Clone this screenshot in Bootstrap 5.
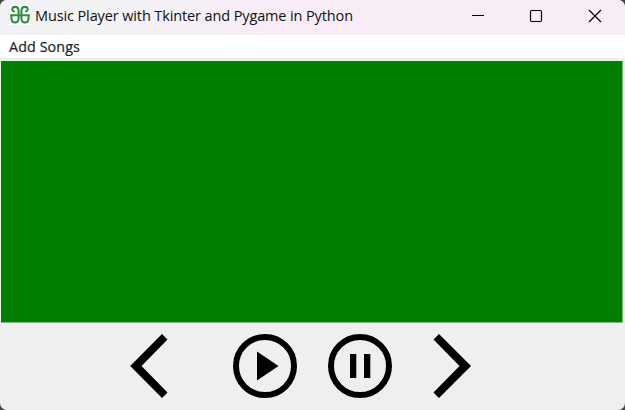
<!DOCTYPE html>
<html lang="en">
<head>
<meta charset="utf-8">
<meta name="viewport" content="width=device-width, initial-scale=1">
<title>Music Player with Tkinter and Pygame in Python</title>
<link href="https://cdn.jsdelivr.net/npm/bootstrap@5.3.0/dist/css/bootstrap.min.css" rel="stylesheet">
<style>
body { background: #444; font-family: "Open Sans", "Noto Sans", sans-serif; color: #111; }
.player-window { height: 410px; background: #efefef; border-radius: 7px; }
.title-strip { height: 35px; background: linear-gradient(90deg, #f2f2f4 0, #f3f1f5 130px, #f8edf7 260px, #f8edf7 100%); padding-left: 10px; }
.app-logo { width: 20px; height: 20px; margin-bottom: 5px; }
.window-title { font-size: 14.5px; line-height: 20px; letter-spacing: -.12px; margin: 0 0 3px 5px; }
.window-control { width: 58px; height: 32px; }
.menu-strip { height: 23px; padding-left: 9px; }
.menu-entry { font-size: 14.3px; line-height: 22px; letter-spacing: .1px; padding-top: 1px; color: #222; -webkit-text-stroke: .2px #222; }
.song-list { height: 262px; margin: 3px 2px 0 1px; background: #008000; border: 1px solid; border-color: #286c28 #79bd79 #79bd79 #286c28; }
.controls { padding: 9px 0 0 127px; }
.controls button { width: 70px; height: 70px; }
.controls .play-button { margin-left: 33px; }
.controls .pause-button { margin-left: 25px; }
.controls .next-button { margin-left: 35px; }
</style>
<script src="https://cdn.jsdelivr.net/npm/bootstrap@5.3.0/dist/js/bootstrap.bundle.min.js"></script>
</head>
<body class="overflow-hidden">
<main class="player-window overflow-hidden">
  <header class="title-strip d-flex align-items-center">
    <svg class="app-logo" viewBox="0 0 20 20" aria-hidden="true">
      <rect width="20" height="20" fill="#fff"/>
      <g fill="none" stroke="#2f8d46" stroke-width="2.100">
        <path d="M4.800 6.200C1.500 6.500 1.500 1.900 5 1.900C7.300 1.900 8.600 3.500 8.600 6V13C8.600 19 1.400 19 1.400 13V10"/>
        <path d="M15.200 6.200C18.500 6.500 18.500 1.900 15 1.900C12.700 1.900 11.400 3.500 11.400 6V13C11.400 19 18.600 19 18.600 13V10"/>
        <path d="M.3 10.300H19.700"/>
      </g>
    </svg>
    <h1 class="window-title fw-normal text-nowrap">Music Player with Tkinter and Pygame in Python</h1>
    <div class="d-flex ms-auto align-self-start">
      <button class="window-control btn p-0 border-0 rounded-0 d-flex" aria-label="Minimize"><svg width="58" height="32"><path d="M21 15.500H33" stroke="#000"/></svg></button>
      <button class="window-control btn p-0 border-0 rounded-0 d-flex" aria-label="Maximize"><svg width="58" height="32"><rect x="21.500" y="10.500" width="11" height="11" rx="1.200" fill="none" stroke="#000" stroke-width="1.200"/></svg></button>
      <button class="window-control btn p-0 border-0 rounded-0 d-flex" aria-label="Close"><svg width="58" height="32"><path d="M22 10L34 22M34 10L22 22" stroke="#000" stroke-width="1.200"/></svg></button>
    </div>
  </header>
  <nav class="menu-strip bg-white d-flex"><a class="menu-entry text-decoration-none" href="#">Add Songs</a></nav>
  <section class="song-list" aria-label="Songs"></section>
  <div class="controls d-flex">
    <button class="btn p-0 border-0 d-flex" aria-label="Previous"><svg width="70" height="70"><path d="M3.200 34L35 2L40.500 7.500L14.500 34L40.500 60.500L35 66Z"/></svg></button>
    <button class="play-button btn p-0 border-0 d-flex" aria-label="Play"><svg width="70" height="70"><circle cx="35" cy="34" r="29" fill="none" stroke="#000" stroke-width="6"/><path d="M27 19.500L48.500 34L27 48.500Z"/></svg></button>
    <button class="pause-button btn p-0 border-0 d-flex" aria-label="Pause"><svg width="70" height="70"><circle cx="35" cy="34" r="29" fill="none" stroke="#000" stroke-width="6"/><path d="M25 22H31.300V46H25ZM39 22H45.300V46H39Z"/></svg></button>
    <button class="next-button btn p-0 border-0 d-flex" aria-label="Next"><svg width="70" height="70"><path d="M41 34L9 2L3.500 7.500L29.500 34L3.500 60.500L9 66Z"/></svg></button>
  </div>
</main>
</body>
</html>
